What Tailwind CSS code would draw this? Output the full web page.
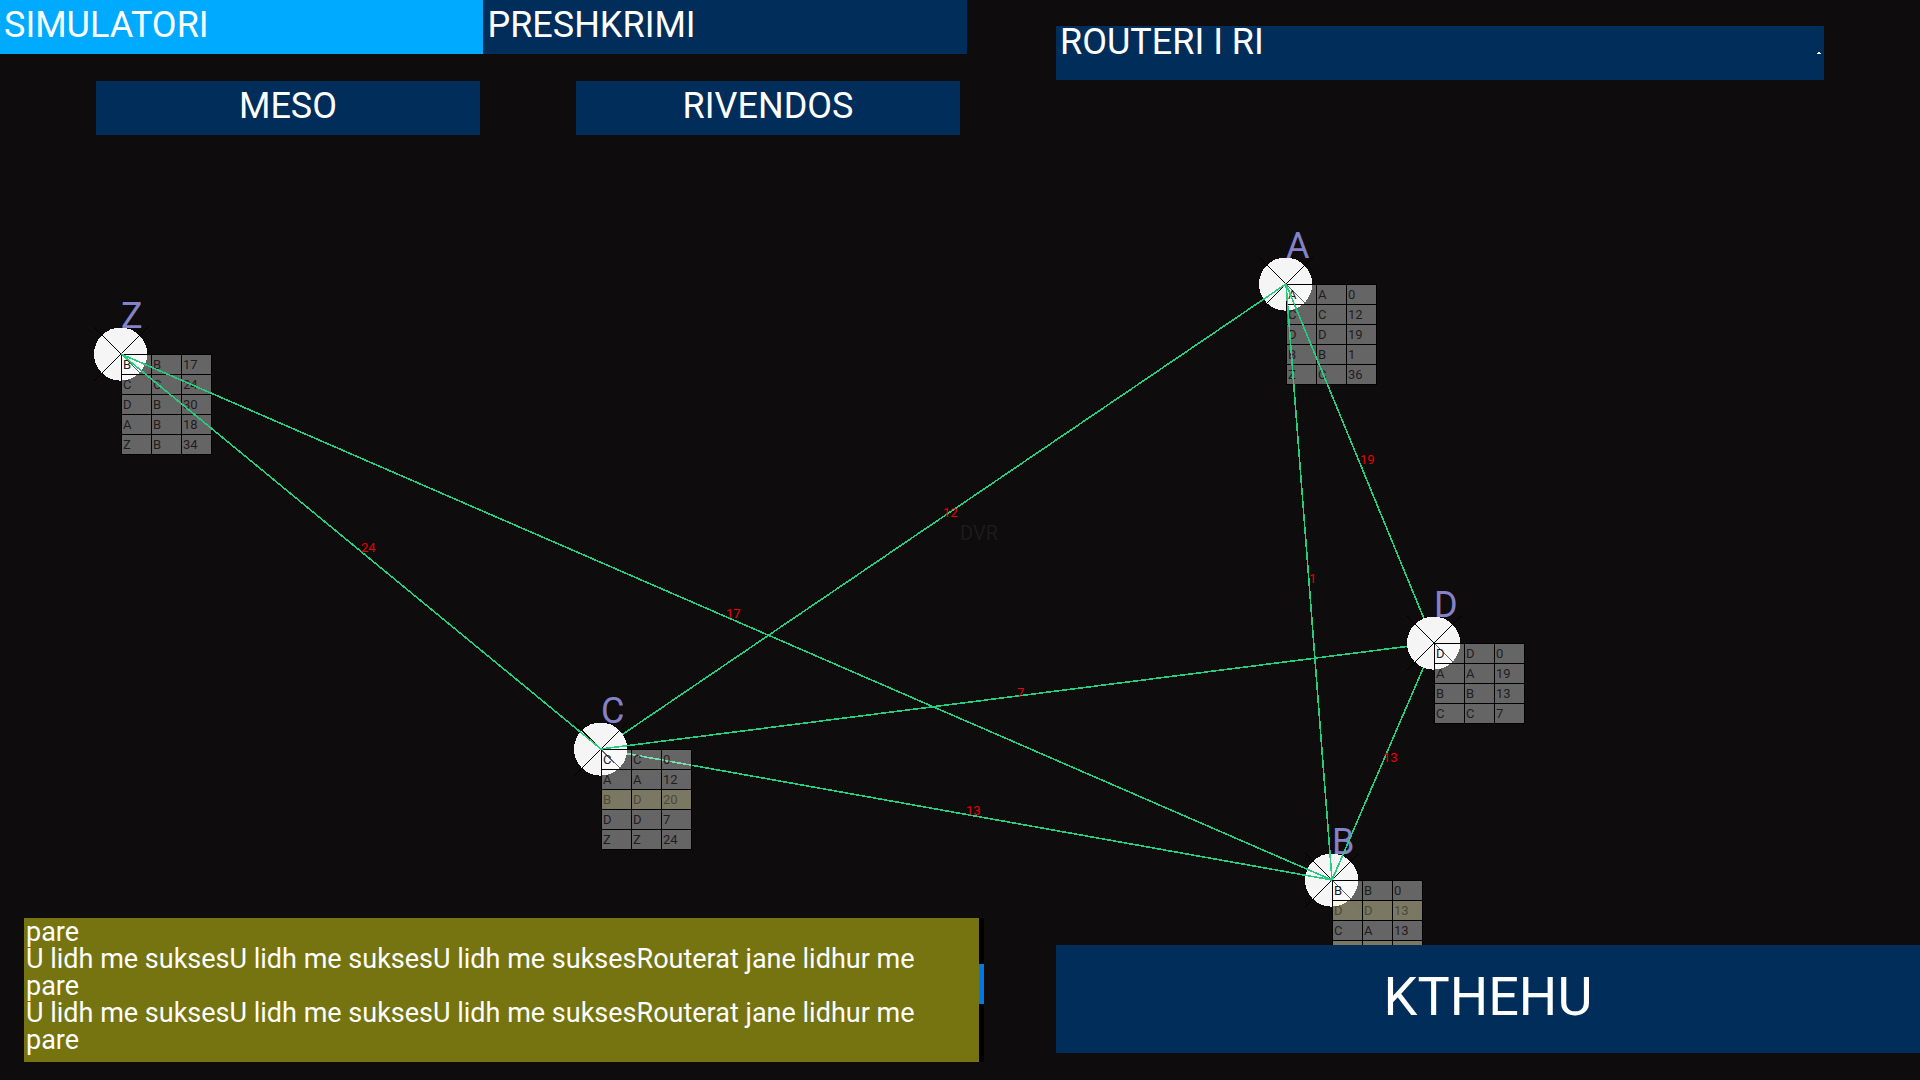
<!DOCTYPE html>
<html lang="sq">
<head>
<meta charset="utf-8">
<meta name="viewport" content="width=device-width, initial-scale=1">
<title>DVR</title>
<script src="https://cdn.jsdelivr.net/npm/@tailwindcss/browser@4"></script>
</head>
<body class="bg-[#0e0c0d] font-[Roboto,sans-serif] text-white">
<main class="relative grid h-screen grid-cols-[50.36%_4.64%_45%] overflow-hidden">

  <!-- Network canvas: nodes and links stacked in drawing order -->
  <section id="net" aria-label="DVR" class="absolute inset-0 overflow-hidden">
    <p class="absolute top-1/2 left-1/2 -mt-[21px] text-xl text-[#1c1b1c]">DVR</p>
  </section>

  <div class="relative flex flex-col">
    <nav class="flex h-[5vh]">
      <button class="flex flex-1 items-center bg-[#00aaff] pb-1 pl-1 text-4xl">SIMULATORI</button>
      <button class="flex flex-1 items-center bg-[#002d5a] pb-1 pl-1 text-4xl">PRESHKRIMI</button>
    </nav>
    <div class="mt-[2.5vh] flex h-[5vh] gap-[5vw] pl-[5vw]">
      <button class="flex w-[20vw] items-center justify-center bg-[#002d5a] pb-1 text-4xl">MESO</button>
      <button class="flex w-[20vw] items-center justify-center bg-[#002d5a] pb-1 text-4xl">RIVENDOS</button>
    </div>
    <div class="mt-auto mb-[18px] ml-6 flex h-36 w-[50vw]">
      <div role="log" class="flex-1 bg-[#757410] pt-px pl-0.5 text-[27px] leading-[27px] whitespace-nowrap">
        <p>pare</p>
        <p>U lidh me suksesU lidh me suksesU lidh me suksesRouterat jane lidhur me<br>pare</p>
        <p>U lidh me suksesU lidh me suksesU lidh me suksesRouterat jane lidhur me<br>pare</p>
      </div>
      <div class="w-[5px] bg-black pt-[46px]"><div class="h-10 bg-[#0078e6]"></div></div>
    </div>
  </div>

  <div class="relative col-start-3 flex flex-col justify-between pt-[26px] pb-[27px]">
    <button class="flex h-[5vh] w-[40vw] items-start justify-between bg-[#002d5a] pr-[3px] pl-1 text-4xl leading-8">
      <span>ROUTERI I RI</span>
      <svg class="mt-[26px] h-[2px] w-[4px]" viewBox="0 0 4 2" shape-rendering="crispEdges" fill="#fff"><path d="M1 0h2v1h1v1H0V1h1z"/></svg>
    </button>
    <button class="flex h-[10vh] items-center justify-center bg-[#002d5a] pb-1.5 text-[54px]">KTHEHU</button>
  </div>
</main>

<script>
const nodes = {
  B: {x: 1332, y: 880, rows: [['B','B','0'],['D','D','13',1],['C','A','13'],['A','A','1',1]]},
  A: {x: 1286, y: 284, rows: [['A','A','0'],['C','C','12'],['D','D','19'],['B','B','1'],['Z','C','36']]},
  C: {x: 601, y: 749, rows: [['C','C','0'],['A','A','12'],['B','D','20',1],['D','D','7'],['Z','Z','24']]},
  D: {x: 1434, y: 643, rows: [['D','D','0'],['A','A','19'],['B','B','13'],['C','C','7']]},
  Z: {x: 121, y: 354, rows: [['B','B','17'],['C','C','24'],['D','B','30'],['A','B','18'],['Z','B','34']]}
};
const net = document.getElementById('net');
const add = html => net.insertAdjacentHTML('beforeend', html);

function drawNode(name) {
  const n = nodes[name];
  const rows = n.rows.map(r =>
    `<tr class="${r[3] ? 'bg-[#fffbca]/45 text-[#4c4a36]' : 'bg-white/37 text-[#1f1d1e]'}">` +
    r.slice(0, 3).map(c => `<td class="h-5 w-[30px] border-t border-l border-black p-0 pt-px pl-px leading-4">${c}</td>`).join('') +
    '</tr>').join('');
  add(`<div class="absolute" style="left:${n.x}px;top:${n.y}px">
    <svg class="absolute -top-7 -left-7 size-14" viewBox="-28 -28 56 56" shape-rendering="crispEdges">
      <circle cx="-.4" cy=".1" r="26.6" fill="#f5f5f5"/>
      <path d="M-27 -27L27 27M27 -27L-27 27" stroke="#000" stroke-width="1.4"/>
    </svg>
    <span class="absolute -top-[58px] left-0 text-4xl text-[#8482c8]">${name}</span>
    <table class="absolute top-0 left-0 w-[91px] table-fixed border-separate border-spacing-0 border-r border-b border-black text-[13px]"><tbody>${rows}</tbody></table>
  </div>`);
}
function drawLinks(list) {
  add('<svg class="absolute inset-0 size-full">' + list.map(([a, b, cost]) => {
    const p = nodes[a], q = nodes[b];
    return `<line x1="${p.x}" y1="${p.y}" x2="${q.x}" y2="${q.y}" stroke="#25cd80" stroke-width="1.6" shape-rendering="crispEdges"/>
      <text class="text-[13px]" fill="#e60000" x="${Math.floor((p.x + q.x) / 2)}" y="${Math.floor((p.y + q.y) / 2) + 1}">${cost}</text>`;
  }).join('') + '</svg>');
}

drawNode('B');
drawNode('A');
drawLinks([['A','B',1], ['A','C',12], ['A','D',19], ['B','C',13], ['B','D',13]]);
drawNode('C');
drawLinks([['C','D',7]]);
drawNode('D');
drawNode('Z');
drawLinks([['Z','B',17], ['Z','C',24]]);
</script>
</body>
</html>
